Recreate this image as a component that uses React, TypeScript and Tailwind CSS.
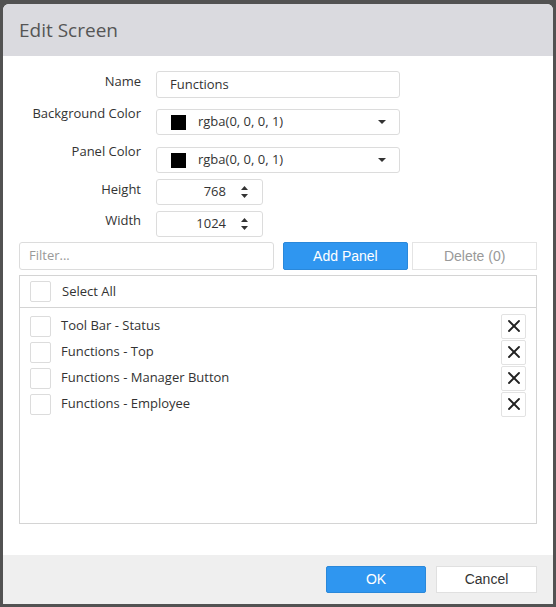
import { X } from "lucide-react";

const items = [
  "Tool Bar - Status",
  "Functions - Top",
  "Functions - Manager Button",
  "Functions - Employee",
];

const Caret = () => (
  <svg width="8" height="4" viewBox="0 0 8 4" className="fill-[#333]">
    <path d="M0 0h8L4 4z" />
  </svg>
);

const Spinner = ({ value }: { value: string }) => (
  <div className="flex h-[26px] w-[107px] items-center rounded-[3px] border border-[#dcdcdc] bg-white pl-2 pr-[14px]">
    <span className="flex-1 pr-[15px] text-right text-[13px] text-[#333]">{value}</span>
    <div className="flex flex-col items-center gap-[4px]">
      <svg width="7" height="4" viewBox="0 0 7 4" className="fill-[#333]">
        <path d="M0 4h7L3.5 0z" />
      </svg>
      <svg width="7" height="4" viewBox="0 0 7 4" className="fill-[#333]">
        <path d="M0 0h7L3.5 4z" />
      </svg>
    </div>
  </div>
);

const ColorSelect = () => (
  <div className="flex h-[26px] w-[244px] items-center rounded-[3px] border border-[#dcdcdc] bg-white pl-[14px] pr-[13px]">
    <span className="h-[15px] w-[15px] bg-black" />
    <span className="ml-[12px] flex-1 text-[13px] text-[#333]">rgba(0, 0, 0, 1)</span>
    <Caret />
  </div>
);

const Check = () => (
  <span className="h-[21px] w-[21px] shrink-0 rounded-[2px] border border-[#dcdcdc] bg-white" />
);

export default function App() {
  return (
    <div
      className="h-[607px] w-[556px] bg-[#525252] pl-[3px] pt-[4px]"
      style={{ fontFamily: "'Open Sans', 'Noto Sans', sans-serif" }}
    >
      <div className="flex h-[600px] w-[550px] flex-col overflow-hidden rounded-t-[6px] bg-white">
        <div className="flex h-[52px] items-center bg-[#dadadf] pl-[16px]">
          <h1 className="text-[19px] text-[#555]">Edit Screen</h1>
        </div>

        <div className="flex flex-1 flex-col px-[16px] pt-[15px]">
          <div className="flex flex-col text-[13px] text-[#333]">
            <div className="flex items-start">
              <label className="w-[122px] text-right leading-[20px]">Name</label>
              <div className="ml-[15px] flex h-[27px] w-[244px] items-center rounded-[3px] border border-[#dcdcdc] px-[13px]">
                Functions
              </div>
            </div>
            <div className="mt-[11px] flex items-start">
              <label className="-mt-[6px] w-[122px] text-right leading-[20px]">Background Color</label>
              <div className="ml-[15px]"><ColorSelect /></div>
            </div>
            <div className="mt-[12px] flex items-start">
              <label className="-mt-[6px] w-[122px] text-right leading-[20px]">Panel Color</label>
              <div className="ml-[15px]"><ColorSelect /></div>
            </div>
            <div className="mt-[6px] flex items-start">
              <label className="w-[122px] text-right leading-[20px]">Height</label>
              <div className="ml-[15px]"><Spinner value="768" /></div>
            </div>
            <div className="mt-[6px] flex items-start">
              <label className="-mt-[1px] w-[122px] text-right leading-[20px]">Width</label>
              <div className="ml-[15px]"><Spinner value="1024" /></div>
            </div>
          </div>

          <div className="mt-[5px] flex items-center">
            <div className="flex h-[28px] w-[255px] items-center rounded-[3px] border border-[#dcdcdc] px-[9px] text-[13px] text-[#999]">
              Filter...
            </div>
            <button
              className="ml-[9px] h-[28px] w-[126px] rounded-[2px] border border-[#2a88da] bg-[#2f96f0] text-[14px] text-white"
              style={{ fontFamily: "'Liberation Sans', Arial, sans-serif" }}
            >
              Add Panel
            </button>
            <button
              className="ml-[4px] h-[28px] w-[125px] border border-[#e4e4e4] bg-white text-[14px] text-[#999]"
              style={{ fontFamily: "'Liberation Sans', Arial, sans-serif" }}
            >
              Delete (0)
            </button>
          </div>

          <div className="mt-[5px] h-[249px] w-[518px] border border-[#d4d4d4]">
            <div className="flex h-[32px] items-center border-b border-[#d4d4d4] pl-[10px]">
              <Check />
              <span className="ml-[11px] text-[13px] text-[#333]">Select All</span>
            </div>
            <div className="flex flex-col pt-[5px]">
              {items.map((t) => (
                <div key={t} className="flex h-[26px] items-center pl-[10px] pr-[10px]">
                  <Check />
                  <span className="ml-[10px] flex-1 text-[13px] text-[#333]">{t}</span>
                  <button className="flex h-[25px] w-[25px] items-center justify-center rounded-[2px] border border-[#e2e2e2] bg-white">
                    <X size={20} strokeWidth={2.2} color="#222" />
                  </button>
                </div>
              ))}
            </div>
          </div>
        </div>

        <div className="flex h-[49px] items-center justify-end gap-[10px] bg-[#efefef] pr-[16px]">
          <button
            className="h-[27px] w-[100px] rounded-[2px] border border-[#2a88da] bg-[#2f96f0] text-[14px] text-white"
            style={{ fontFamily: "'Liberation Sans', Arial, sans-serif" }}
          >
            OK
          </button>
          <button
            className="h-[27px] w-[101px] border border-[#e0e0e0] bg-white text-[14px] text-[#333]"
            style={{ fontFamily: "'Liberation Sans', Arial, sans-serif" }}
          >
            Cancel
          </button>
        </div>
      </div>
    </div>
  );
}
